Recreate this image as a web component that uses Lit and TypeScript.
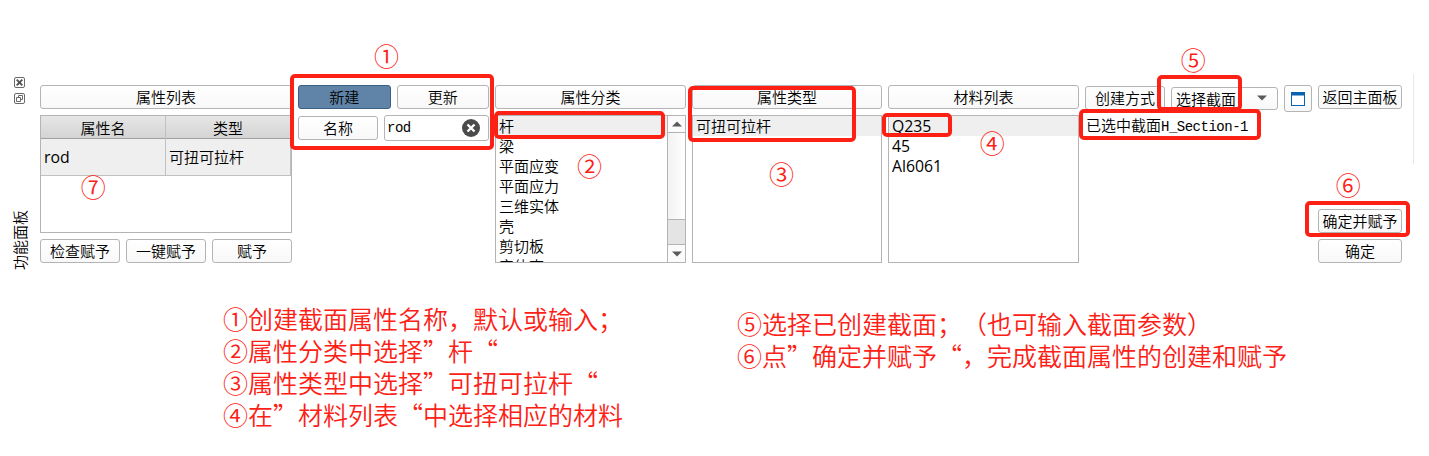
import { LitElement, html, css } from "lit";
import { customElement } from "lit/decorators.js";
import { styleMap } from "lit/directives/style-map.js";

const categories = ["杆", "梁", "平面应变", "平面应力", "三维实体", "壳", "剪切板", "实体壳"];
const materials = ["Q235", "45", "Al6061"];

const frames = [
  [289.5, 73.5, 204, 76],
  [494, 110.5, 171, 28],
  [687.5, 85.5, 168, 56],
  [881.5, 112.5, 70, 24.5],
  [1156.5, 74.5, 85, 36],
  [1078.5, 108.5, 182, 31.5],
  [1304.5, 200.5, 105, 36.5],
];

const marks: [string, number, number][] = [
  ["①", 386.5, 54.5],
  ["②", 589.5, 164.5],
  ["③", 781.5, 172.5],
  ["④", 992.3, 142],
  ["⑤", 1193.3, 58.5],
  ["⑥", 1348.3, 183.5],
  ["⑦", 93.3, 186],
];

const notesLeft = [
  "①创建截面属性名称，默认或输入；",
  "②属性分类中选择”杆“",
  "③属性类型中选择”可扭可拉杆“",
  "④在”材料列表“中选择相应的材料",
];
const notesRight = ["⑤选择已创建截面；（也可输入截面参数）", "⑥点”确定并赋予“，完成截面属性的创建和赋予"];

@customElement("app-root")
export class AppRoot extends LitElement {
  static styles = css`
    :host {
      display: block;
      position: relative;
      width: 1429px;
      height: 456px;
      overflow: hidden;
      background: #fff;
      color: #000;
      font: 350 15px/20px "Noto Sans CJK SC", sans-serif;
      text-spacing-trim: space-all;
    }
    * { box-sizing: border-box; }
    .dock {
      display: grid;
      grid-template-columns: 34px 252px 191px 191px 190px 191px 227px 84px 6px;
      column-gap: 6px;
      height: 189px;
      margin-top: 74px;
      width: 1414px;
    }
    .col { display: flex; flex-direction: column; gap: 6px; padding-top: 11px; min-width: 0; min-height: 0; }
    .row { display: flex; gap: 6px; }
    .edge { height: 90px; border-right: 1px solid #e8e8e8; }
    .side { display: flex; flex-direction: column; align-items: flex-start; padding: 3px 0 0 14px; gap: 5px; }
    .side svg { display: block; }
    .title {
      writing-mode: vertical-rl;
      text-orientation: sideways;
      transform: rotate(180deg);
      margin: auto 0 -7px -4px;
      line-height: 20px;
      white-space: nowrap;
    }
    .btn {
      height: 24px;
      flex: none;
      border: 1px solid #b4b4b4;
      border-radius: 3px;
      background: linear-gradient(#fff, #f8f8f8);
      font: 350 15px/21px "Noto Sans CJK SC", sans-serif;
      text-align: center;
      padding: 0 0 1px;
      white-space: nowrap;
      color: #000;
    }
    .row .btn { flex: 1 1 0; }
    .row .fixed80 { flex: 0 0 80px; }
    .btn.on { background: #6084a8; border-color: #3c5f85; }
    .mono {
      font: 400 14px/20px "Liberation Mono", monospace;
      letter-spacing: -0.5px;
    }
    .latin { font-family: "Open Sans", sans-serif; font-weight: 400; font-size: 15.8px; }
    .field {
      flex: 1;
      height: 26px;
      border: 1px solid #b4b4b4;
      border-radius: 3px;
      display: flex;
      align-items: center;
      justify-content: space-between;
      padding: 0 8px 0 2px;
    }
    .namerow { align-items: center; }
    .table { flex: 1; border: 1px solid #b4b4b4; }
    .thead, .trow { display: grid; grid-template-columns: 125px 125px; }
    .thead { height: 23px; background: linear-gradient(#e6e6e6, #d4d4d4); border-bottom: 1px solid #a0a0a0; text-align: center; line-height: 23px; }
    .trow { height: 37px; background: #efefef; line-height: 36px; border-bottom: 1px solid #c0c0c0; }
    .thead > *, .trow > * { border-right: 1px solid #c0c0c0; }
    .trow > * { padding-left: 3px; }
    .list { flex: 1; min-height: 0; border: 1px solid #b4b4b4; display: flex; overflow: hidden; }
    .items { flex: 1; min-width: 0; overflow: hidden; }
    .item { height: 20px; line-height: 20px; padding-left: 3px; white-space: nowrap; }
    .item.latin { line-height: 21px; }
    .sel { background: #efefef; }
    .scroll { width: 18px; border-left: 1px solid #b4b4b4; display: flex; flex-direction: column; background: linear-gradient(90deg, #f2f2f2, #fff); }
    .arrow { height: 17px; display: flex; align-items: center; justify-content: center; background: #fbfbfb; }
    .up { border-bottom: 1px solid #b4b4b4; }
    .thumb { margin-top: auto; height: 26px; background: #e4e4e4; border: solid #b4b4b4; border-width: 1px 0; }
    .tools { align-items: center; height: 27px; }
    .tools .fixed80 { margin-bottom: 1px; }
    .row .combo { flex: 0 0 107px; height: 23px; display: flex; justify-content: space-between; align-items: center; padding: 0 10px 1px 4px; }
    .row .win { flex: 0 0 28px; height: 27px; padding: 0; display: flex; align-items: center; justify-content: center; }
    .picked { margin-top: -3px; padding-left: 1px; white-space: nowrap; }
    .gap { flex: 1; }
    .frame { position: absolute; border: 4px solid #fd2015; border-radius: 5px; }
    .mark { position: absolute; width: 26px; height: 26px; margin: -13px 0 0 -13px; text-align: center; }
    .mark, .notes { color: #fd2015; font: 350 25px/26px "Noto Sans CJK SC", sans-serif; }
    .notes { display: flex; gap: 114px; padding: 39px 0 0 223px; line-height: 32px; white-space: nowrap; }
    .left { width: 400px; }
    .right { padding-top: 5px; }
  `;

  private tri(up: boolean) {
    return html`<svg width="10" height="6" viewBox="0 0 10 6"><path d=${up ? "M0 5.5L5 .5L10 5.5Z" : "M0 .5H10L5 5.5Z"} fill="#5a5a5a" /></svg>`;
  }

  render() {
    return html`
      <div class="dock">
        <div class="side">
          <svg width="11" height="11" viewBox="0 0 11 11" fill="none" stroke="#6a6a6a">
            <rect x=".5" y=".5" width="10" height="10" rx="1.5" />
            <path d="M2.7 2.7L8.3 8.3M8.3 2.7L2.7 8.3" stroke="#505050" stroke-width="1.9" />
          </svg>
          <svg width="11" height="11" viewBox="0 0 11 11" fill="none" stroke="#6a6a6a">
            <rect x=".5" y=".5" width="10" height="10" rx="1.5" />
            <path d="M4.5 4V2.5H8.5V6.5H7M2.5 4.5H6.5V8.5H2.5Z" />
          </svg>
          <div class="title">功能面板</div>
        </div>

        <div class="col">
          <button class="btn">属性列表</button>
          <div class="table">
            <div class="thead"><span>属性名</span><span>类型</span></div>
            <div class="trow"><span class="latin">rod</span><span>可扭可拉杆</span></div>
          </div>
          <div class="row">
            <button class="btn">检查赋予</button><button class="btn">一键赋予</button><button class="btn">赋予</button>
          </div>
        </div>

        <div class="col">
          <div class="row"><button class="btn on">新建</button><button class="btn">更新</button></div>
          <div class="row namerow">
            <button class="btn fixed80">名称</button>
            <div class="field">
              <span class="mono">rod</span>
              <svg width="18" height="18" viewBox="0 0 18 18">
                <circle cx="9" cy="9" r="9" fill="#4b4b4b" />
                <path d="M5.5 5.5L12.5 12.5M12.5 5.5L5.5 12.5" stroke="#fff" stroke-width="2.4" />
              </svg>
            </div>
          </div>
        </div>

        <div class="col">
          <button class="btn">属性分类</button>
          <div class="list">
            <div class="items">${categories.map((c, i) => html`<div class="item ${i ? "" : "sel"}">${c}</div>`)}</div>
            <div class="scroll">
              <div class="arrow up">${this.tri(true)}</div>
              <div class="thumb"></div>
              <div class="arrow">${this.tri(false)}</div>
            </div>
          </div>
        </div>

        <div class="col">
          <button class="btn">属性类型</button>
          <div class="list"><div class="items"><div class="item sel">可扭可拉杆</div></div></div>
        </div>

        <div class="col">
          <button class="btn">材料列表</button>
          <div class="list">
            <div class="items">${materials.map((c, i) => html`<div class="item latin ${i ? "" : "sel"}">${c}</div>`)}</div>
          </div>
        </div>

        <div class="col">
          <div class="row tools">
            <button class="btn fixed80">创建方式</button>
            <button class="btn combo">选择截面 ${this.tri(false)}</button>
            <button class="btn win">
              <svg width="14" height="14" viewBox="0 0 14 14">
                <rect x=".5" y=".5" width="13" height="13" fill="#fff" stroke="#0a63b0" />
                <rect width="14" height="3.5" fill="#0a63b0" />
              </svg>
            </button>
          </div>
          <div class="picked">已选中截面<span class="mono">H_Section-1</span></div>
        </div>

        <div class="col">
          <button class="btn">返回主面板</button>
          <div class="gap"></div>
          <button class="btn">确定并赋予</button>
          <button class="btn">确定</button>
        </div>
        <div class="edge"></div>
      </div>

      <div class="notes">
        <div class="left">${notesLeft.map((n) => html`<div>${n}</div>`)}</div>
        <div class="right">${notesRight.map((n) => html`<div>${n}</div>`)}</div>
      </div>

      ${frames.map(([x, y, w, h]) => html`<div class="frame" style=${styleMap({ left: x + "px", top: y + "px", width: w + "px", height: h + "px" })}></div>`)}
      ${marks.map(([t, x, y]) => html`<div class="mark" style=${styleMap({ left: x + "px", top: y + "px" })}>${t}</div>`)}
    `;
  }
}
